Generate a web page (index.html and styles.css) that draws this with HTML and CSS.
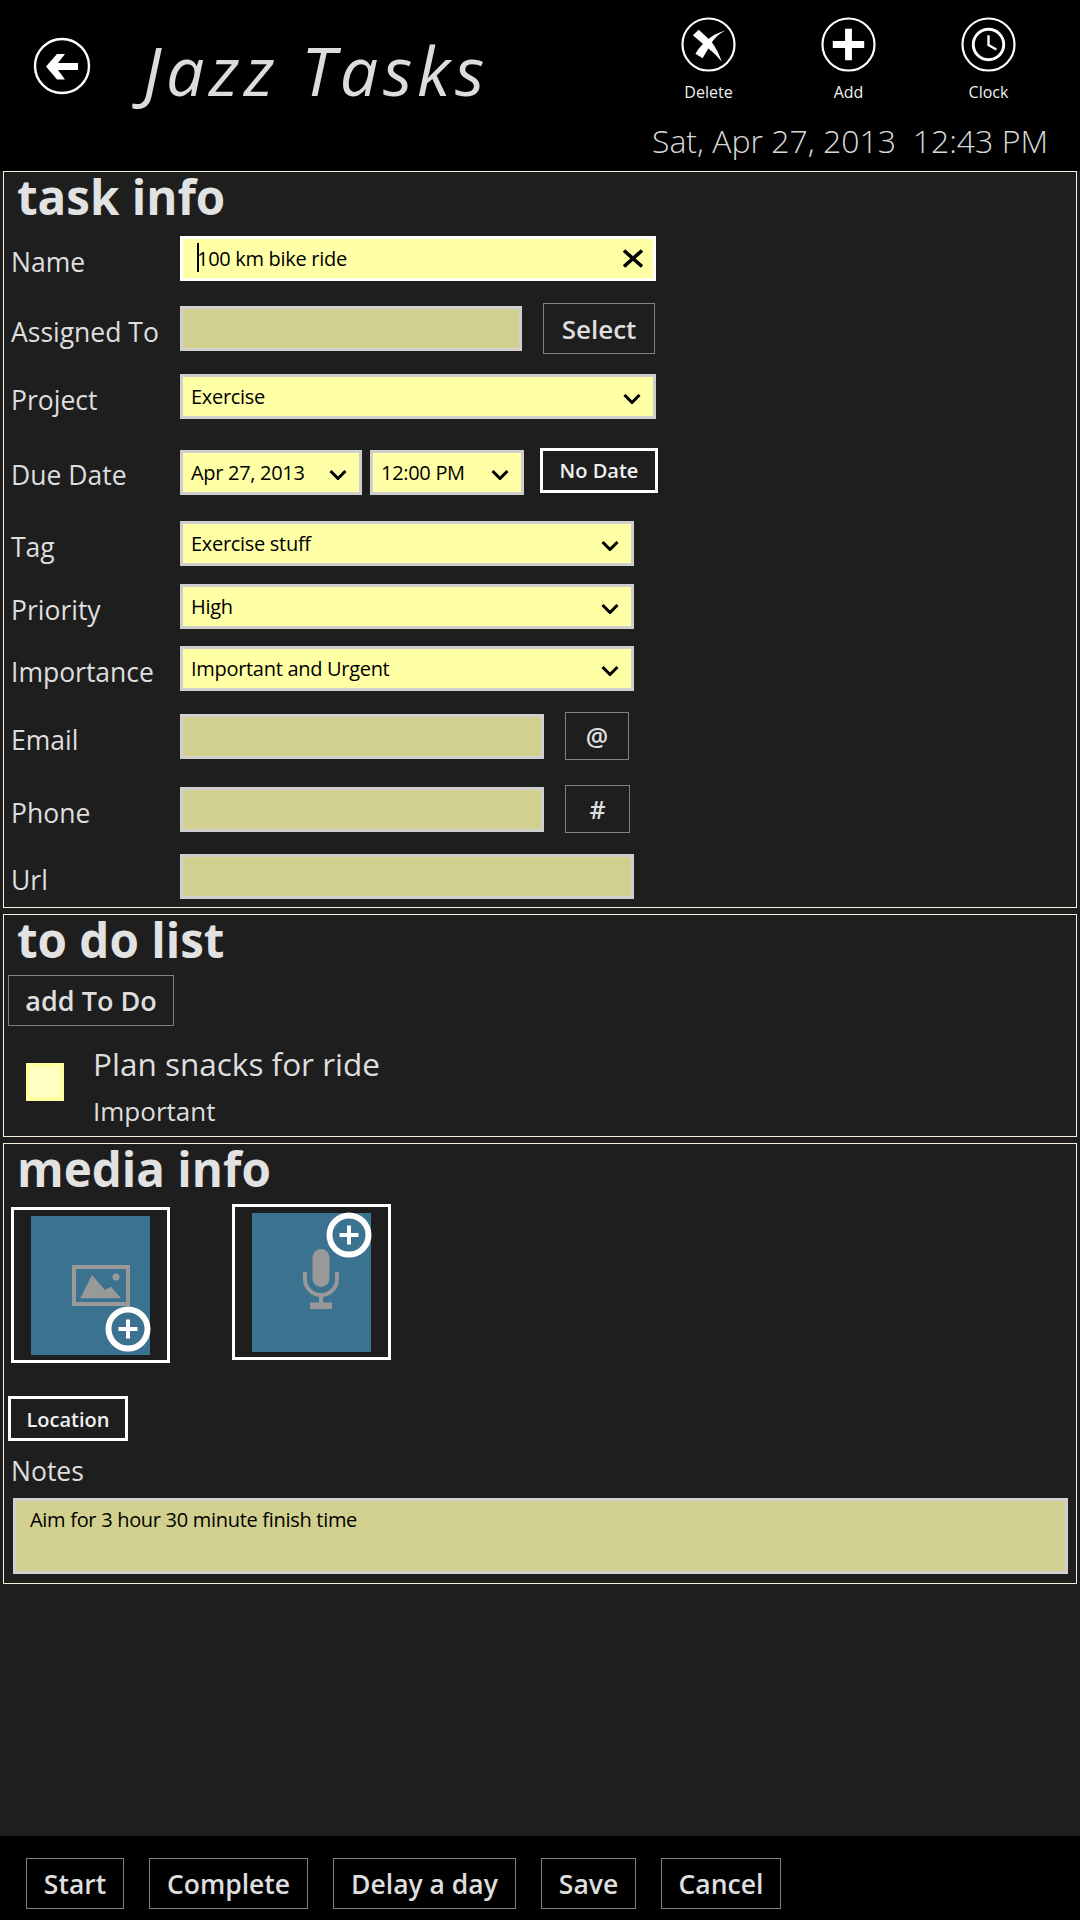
FILE: index.html
```html
<!DOCTYPE html>
<html lang="en">
<head>
<meta charset="utf-8">
<title>Jazz Tasks</title>
<link rel="stylesheet" href="styles.css">
</head>
<body>
<div class="app">
  <header class="topbar">
    <div class="brand">
      <svg class="back-icon" viewBox="0 0 60 60" aria-hidden="true">
        <circle cx="30" cy="30" r="27" fill="none" stroke="#fff" stroke-width="2.400"/>
        <path fill="#fff" d="M14 30.500 25 18h8l-7 9h20v7H26l7 9.500h-8z"/>
      </svg>
      <div class="app-title">Jazz Tasks</div>
    </div>
    <div class="top-right">
      <div class="actions">
        <div class="action">
          <svg class="action-icon" viewBox="0 0 56 56" aria-hidden="true">
            <circle cx="28" cy="28" r="26.500" fill="none" stroke="#fff" stroke-width="2.200"/>
            <path fill="#fff" d="M12 18.700 18 13 31 25C36 32 39.500 39 41.300 45.300 37 40 33 36 28.500 32.500Z"/>
            <path fill="#fff" d="M14.700 37.300C19 30 25 24 31 20 35 17.500 40 15 45.300 13.700 39 17 35 20.500 32 25L22 42Z"/>
          </svg>
          <div class="action-label">Delete</div>
        </div>
        <div class="action">
          <svg class="action-icon" viewBox="0 0 56 56" aria-hidden="true">
            <circle cx="28" cy="28" r="26.500" fill="none" stroke="#fff" stroke-width="2.200"/>
            <path fill="#fff" d="M24.500 12h7v12.500H44v7H31.500V44h-7V31.500H12v-7h12.500z"/>
          </svg>
          <div class="action-label">Add</div>
        </div>
        <div class="action">
          <svg class="action-icon" viewBox="0 0 56 56" aria-hidden="true">
            <circle cx="28" cy="28" r="26.500" fill="none" stroke="#fff" stroke-width="2.200"/>
            <circle cx="28" cy="28" r="15.500" fill="none" stroke="#fff" stroke-width="3"/>
            <path fill="none" stroke="#fff" stroke-width="2.400" d="M28 18.500V28.500L36 33"/>
          </svg>
          <div class="action-label">Clock</div>
        </div>
      </div>
      <div class="clock-text">Sat, Apr 27, 2013&nbsp; 12:43 PM</div>
    </div>
  </header>

  <main class="content">
    <section class="panel panel-task">
      <h2 class="panel-title">task info</h2>

      <div class="row row-name">
        <div class="label">Name</div>
        <div class="field active wide"><span class="caret"></span><span class="typed">100 km bike ride</span>
          <svg class="clear-icon" viewBox="0 0 22 19" aria-hidden="true"><path d="M2 1.500 20 17.500M20 1.500 2 17.500" fill="none" stroke="#000" stroke-width="3.600"/></svg>
        </div>
      </div>

      <div class="row row-assigned">
        <div class="label">Assigned To</div>
        <div class="field empty assigned"></div>
        <div class="btn btn-select">Select</div>
      </div>

      <div class="row row-project">
        <div class="label">Project</div>
        <div class="field combo wide"><span>Exercise</span>
          <svg class="chev" viewBox="0 0 18 10" aria-hidden="true"><path d="M1.500 1 9 8.500 16.500 1" fill="none" stroke="#000" stroke-width="3"/></svg>
        </div>
      </div>

      <div class="row row-due">
        <div class="label">Due Date</div>
        <div class="field combo date"><span>Apr 27, 2013</span>
          <svg class="chev" viewBox="0 0 18 10" aria-hidden="true"><path d="M1.500 1 9 8.500 16.500 1" fill="none" stroke="#000" stroke-width="3"/></svg>
        </div>
        <div class="field combo time"><span>12:00 PM</span>
          <svg class="chev" viewBox="0 0 18 10" aria-hidden="true"><path d="M1.500 1 9 8.500 16.500 1" fill="none" stroke="#000" stroke-width="3"/></svg>
        </div>
        <div class="btn-strong btn-nodate">No Date</div>
      </div>

      <div class="row row-tag">
        <div class="label">Tag</div>
        <div class="field combo medium"><span>Exercise stuff</span>
          <svg class="chev" viewBox="0 0 18 10" aria-hidden="true"><path d="M1.500 1 9 8.500 16.500 1" fill="none" stroke="#000" stroke-width="3"/></svg>
        </div>
      </div>

      <div class="row row-priority">
        <div class="label">Priority</div>
        <div class="field combo medium"><span>High</span>
          <svg class="chev" viewBox="0 0 18 10" aria-hidden="true"><path d="M1.500 1 9 8.500 16.500 1" fill="none" stroke="#000" stroke-width="3"/></svg>
        </div>
      </div>

      <div class="row row-importance">
        <div class="label">Importance</div>
        <div class="field combo medium"><span>Important and Urgent</span>
          <svg class="chev" viewBox="0 0 18 10" aria-hidden="true"><path d="M1.500 1 9 8.500 16.500 1" fill="none" stroke="#000" stroke-width="3"/></svg>
        </div>
      </div>

      <div class="row row-email">
        <div class="label">Email</div>
        <div class="field empty contact"></div>
        <div class="btn btn-mini">@</div>
      </div>

      <div class="row row-phone">
        <div class="label">Phone</div>
        <div class="field empty contact"></div>
        <div class="btn btn-mini btn-hash">#</div>
      </div>

      <div class="row row-url">
        <div class="label">Url</div>
        <div class="field empty medium"></div>
      </div>
    </section>

    <section class="panel panel-todo">
      <h2 class="panel-title">to do list</h2>
      <div class="btn btn-add">add To Do</div>
      <div class="todo">
        <div class="checkbox"><div class="checkbox-inner"></div></div>
        <div class="todo-text">
          <div class="todo-title">Plan snacks for ride</div>
          <div class="todo-sub">Important</div>
        </div>
      </div>
    </section>

    <section class="panel panel-media">
      <h2 class="panel-title">media info</h2>
      <div class="tiles">
        <div class="tile tile-photo">
          <div class="tile-fill">
            <svg class="photo-icon" viewBox="0 0 58 41" aria-hidden="true">
              <rect x="2" y="2" width="54" height="37" fill="none" stroke="#999" stroke-width="4"/>
              <path fill="#999" d="M8.300 33.300 20 10 33 25l6-3.300 10 11.600z"/>
              <circle cx="44" cy="12" r="3.500" fill="#999"/>
            </svg>
            <svg class="badge badge-bottom" viewBox="0 0 46 46" aria-hidden="true">
              <circle cx="23" cy="23" r="19.500" fill="#3b7290" stroke="#fff" stroke-width="6"/>
              <path fill="#fff" d="M21 13.500h4v7.500h7.500v4H25v7.500h-4V25h-7.500v-4H21z"/>
            </svg>
          </div>
        </div>
        <div class="tile tile-audio">
          <div class="tile-fill">
            <svg class="mic-icon" viewBox="0 0 36 60" aria-hidden="true">
              <rect x="9.500" y="0" width="17" height="38" rx="8.500" fill="#999"/>
              <path d="M2 23v7a16 16 0 0 0 32 0v-7" fill="none" stroke="#999" stroke-width="4"/>
              <path d="M16 46h4v8h-4z" fill="#999"/>
              <rect x="7" y="53.500" width="22" height="6.500" fill="#999"/>
            </svg>
            <svg class="badge badge-top" viewBox="0 0 46 46" aria-hidden="true">
              <circle cx="23" cy="23" r="19.500" fill="#3b7290" stroke="#fff" stroke-width="6"/>
              <path fill="#fff" d="M21 13.500h4v7.500h7.500v4H25v7.500h-4V25h-7.500v-4H21z"/>
            </svg>
          </div>
        </div>
      </div>
      <div class="btn-strong btn-location">Location</div>
      <div class="label notes-label">Notes</div>
      <div class="field empty notes">Aim for 3 hour 30 minute finish time</div>
    </section>
  </main>

  <footer class="bottombar">
    <div class="btn foot-btn foot-start">Start</div>
    <div class="btn foot-btn foot-complete">Complete</div>
    <div class="btn foot-btn foot-delay">Delay a day</div>
    <div class="btn foot-btn foot-save">Save</div>
    <div class="btn foot-btn foot-cancel">Cancel</div>
  </footer>
</div>
</body>
</html>
```
FILE: styles.css
```css
* { box-sizing: border-box; }
html, body { margin: 0; padding: 0; }
body {
  width: 1080px;
  height: 1920px;
  overflow: hidden;
  background: #1e1e1e;
  font-family: "Open Sans", "Noto Sans", sans-serif;
  color: #dedede;
}
.app { width: 1080px; height: 1920px; display: flex; flex-direction: column; }

/* header */
.topbar {
  height: 171px;
  flex: none;
  background: #000;
  display: flex;
  justify-content: space-between;
}
.brand { display: flex; align-items: flex-start; }
.back-icon { width: 60px; height: 60px; margin: 36px 0 0 32px; flex: none; }
.app-title {
  margin: 28px 0 0 51px;
  font-size: 68px;
  line-height: 84px;
  font-style: italic;
  font-weight: 400;
  letter-spacing: 4.700px;
  color: #dcdcdc;
  white-space: nowrap;
}
.top-right { display: flex; flex-direction: column; align-items: flex-end; padding-right: 32px; }
.actions { display: flex; margin: 17px -10.500px 0 0; }
.action { width: 140px; display: flex; flex-direction: column; align-items: center; }
.action-icon { width: 55px; height: 55px; display: block; }
.action-label { font-size: 16px; line-height: 24px; margin-top: 8px; color: #f0f0f0; }
.clock-text { margin-top: 16px; font-size: 32px; line-height: 42px; font-weight: 300; color: #d8d8d8; white-space: nowrap; }

/* panels */
.content { flex: 1; }
.panel {
  margin: 0 3px 6px;
  padding: 0 4px;
  border: 1px solid #f5efdc;
}
.panel-title {
  margin: 0;
  height: 60px;
  padding-left: 9px;
  font-size: 47.500px;
  line-height: 50px;
  font-weight: 700;
  color: #e2e2e2;
}
.panel-task { height: 737px; }
.panel-todo { height: 223px; }
.panel-media { height: 441px; }

/* rows */
.row { display: flex; align-items: center; height: 45px; }
.row-name { margin-top: 4px; }
.row-assigned { margin-top: 25px; }
.row-project { margin-top: 23px; }
.row-due { margin-top: 31px; }
.row-tag { margin-top: 26px; }
.row-priority { margin-top: 18px; }
.row-importance { margin-top: 17px; }
.row-email { margin-top: 23px; }
.row-phone { margin-top: 28px; }
.row-url { margin-top: 22px; }

.label {
  width: 172px;
  flex: none;
  padding: 6px 0 0 3px;
  font-size: 26.500px;
  line-height: 36px;
  color: #dedede;
}
.row-due .label { padding-top: 4px; }

.field {
  height: 45px;
  flex: none;
  display: flex;
  align-items: center;
  padding: 0 12px 0 8px;
  border: 3px solid #cfcfcf;
  background: #ffffa5;
  color: #000;
  font-size: 20px;
  letter-spacing: -0.3px;
  position: relative;
}
.field.empty { background: #d2d08e; }
.field.active { border-color: #fff; padding: 0 9px 0 14px; }
.combo { justify-content: space-between; padding-right: 12px; }
.wide { width: 476px; }
.medium { width: 454px; }
.assigned { width: 342px; }
.contact { width: 364px; }
.date { width: 182px; }
.time { width: 154px; margin-left: 8px; }
.typed { flex: 1; }
.caret { position: absolute; left: 14px; top: 4px; width: 1.500px; height: 29px; background: #000; }
.clear-icon { width: 22px; height: 19px; flex: none; }
.chev { width: 18px; height: 10px; flex: none; margin-top: 4px; }

/* buttons */
.btn {
  display: flex;
  align-items: center;
  justify-content: center;
  border: 1.500px solid #808080;
  font-weight: 600;
  color: #dedede;
  flex: none;
  white-space: nowrap;
}
.btn-strong {
  display: flex;
  align-items: center;
  justify-content: center;
  border: 3px solid #fff;
  font-weight: 600;
  font-size: 20px;
  color: #f0f0f0;
  flex: none;
  white-space: nowrap;
}
.btn-select { width: 112px; height: 51px; margin-left: 21px; font-size: 26px; }
.btn-mini { width: 64px; height: 48px; margin: -2px 0 0 21px; font-size: 25px; }
.btn-hash { width: 65px; }
.btn-nodate { width: 118px; height: 45px; margin: -4px 0 0 16px; }

/* to do */
.btn-add { width: 166px; height: 51px; font-size: 27px; }
.todo { display: flex; margin: 15px 0 0 18px; }
.checkbox { width: 38px; height: 38px; margin-top: 22px; padding: 4px; background: #ffffa0; flex: none; }
.checkbox-inner { width: 100%; height: 100%; background: #ffffc4; }
.todo-text { margin-left: 29px; }
.todo-title { font-size: 31.500px; line-height: 46px; font-weight: 400; color: #dedede; }
.todo-sub { margin-top: 4px; font-size: 26px; line-height: 40px; color: #dedede; }

/* media */
.tiles { display: flex; margin-left: 3px; align-items: flex-start; }
.tile { width: 159px; height: 156px; padding: 6px 17px; border: 3px solid #fff; flex: none; }
.tile-photo { margin-top: 3px; }
.tile-audio { margin-left: 62px; }
.tile-fill { width: 119px; height: 139px; background: #3b7290; position: relative; }
.photo-icon { position: absolute; left: 41px; top: 49px; width: 58px; height: 41px; }
.mic-icon { position: absolute; left: 51px; top: 36px; width: 36px; height: 60px; }
.badge { position: absolute; width: 46px; height: 46px; }
.badge-bottom { right: -1px; bottom: 3px; }
.badge-top { right: -1px; top: -1px; }

.btn-location { width: 120px; height: 45px; margin-top: 33px; padding-top: 2px; }
.notes-label { width: auto; padding: 0 0 0 3px; margin-top: 10px; line-height: 40px; }
.notes {
  width: 1055px;
  height: 76px;
  margin: 7px 0 0 5px;
  padding: 0 0 0 14px;
  align-items: flex-start;
  line-height: 38px;
}

/* footer */
.bottombar {
  height: 84px;
  flex: none;
  background: #000;
  padding: 22px 0 0 26px;
  display: flex;
  align-items: flex-start;
  gap: 25px;
}
.foot-btn { height: 51px; font-size: 26.500px; }
.foot-start { width: 98px; }
.foot-complete { width: 159px; }
.foot-delay { width: 183px; }
.foot-save { width: 95px; }
.foot-cancel { width: 120px; }
```
